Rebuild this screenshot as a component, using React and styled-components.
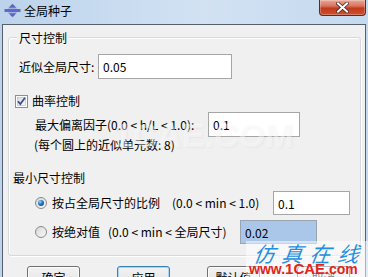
import React from 'react';
import styled, { createGlobalStyle } from 'styled-components';

const Global = createGlobalStyle`
  html, body { margin: 0; padding: 0; }
  body {
    width: 368px; height: 277px; overflow: hidden;
    background: #c4d9ee;
    font-family: "Noto Sans CJK SC", sans-serif;
    font-size: 12px; color: #000;
  }
`;

const Win = styled.div`
  position: relative;
  width: 368px; height: 277px;
  display: flex; flex-direction: column;
  overflow: hidden;
  background: linear-gradient(90deg, #bcd3eb 0%, #d2e2f3 55%, #c5d9ee 100%);
`;

const TitleBar = styled.div`
  height: 24px; flex-shrink: 0;
  display: flex; align-items: flex-start;
`;

const AppIcon = styled.svg`
  margin: 3px 0 0 4px; flex-shrink: 0;
`;

const Title = styled.div`
  margin-left: 3px;
  line-height: 22px;
  font-size: 12px;
`;

const CloseBtn = styled.div`
  margin-left: auto; margin-right: 2px;
  width: 45px; height: 15px;
  border: 1px solid #5e2a20; border-top: none;
  border-radius: 0 0 4px 4px;
  background: linear-gradient(#e9a897 0%, #d8745c 40%, #c2391d 55%, #cd5232 100%);
  display: flex; align-items: center; justify-content: center;
  box-shadow: inset 0 0 0 1px rgba(255,255,255,0.25);
`;

const Client = styled.div`
  flex: 1;
  margin: 0 2px;
  border: 1px solid #56606c; border-bottom: none;
  background: #f0f0f0;
  padding: 12px 4px 0 5px;
  display: flex; flex-direction: column;
`;

const Group = styled.div`
  position: relative;
  border: 1px solid #d3d9de;
  border-radius: 3px;
  box-shadow: inset 1px 1px 0 #fff, 1px 1px 0 #fff;
  padding: 16px 0 11px 0;
  display: flex; flex-direction: column;
`;

const Legend = styled.div`
  position: absolute; left: 8px; top: -8px;
  padding: 0 2px;
  background: #f0f0f0;
  line-height: 16px;
`;

const Row = styled.div`
  display: flex; align-items: center;
  height: ${p => p.$h}px;
  margin-top: ${p => p.$mt || 0}px;
  padding-left: ${p => p.$pl || 0}px;
  white-space: nowrap;
`;

const Label = styled.span`
  display: inline-block;
  width: ${p => (p.$w ? `${p.$w}px` : 'auto')};
  flex-shrink: 0;
  line-height: 16px;
  white-space: nowrap;
`;

const Field = styled.div`
  box-sizing: border-box;
  width: ${p => p.$w}px; height: ${p => p.$h || 25}px;
  border: 1px solid ${p => (p.$sel ? '#9aa4b0' : '#a6a6a6')};
  background: ${p => (p.$sel ? '#aac6e9' : '#fff')};
  padding-left: 4px;
  display: flex; align-items: center;
  flex-shrink: 0;
`;

const Check = styled.svg`
  flex-shrink: 0; margin-right: 4px;
`;

const Radio = styled.svg`
  flex-shrink: 0; margin-right: 5px;
`;

const ButtonRow = styled.div`
  display: flex; gap: 37px;
  margin-top: 10px; padding-left: 19px;
`;

const Button = styled.div`
  box-sizing: border-box;
  width: 53px; height: 23px; flex-shrink: 0;
  border: 1px solid ${p => (p.$def ? '#3c7fb1' : '#707070')};
  border-radius: 3px;
  background: linear-gradient(#f2f2f2 0%, #ebebeb 45%, #dddddd 50%, #cfcfcf 100%);
  box-shadow: inset 0 0 0 1px ${p => (p.$def ? '#a6d6f4' : 'rgba(255,255,255,0.8)')};
  display: flex; align-items: center; justify-content: center;
  line-height: 16px;
`;

const WatermarkFaint = styled.div`
  position: absolute; left: 114px; top: 116px;
  font-family: "Liberation Sans", sans-serif;
  font-weight: bold; font-size: 34px;
  color: rgba(255,255,255,0.45);
  text-shadow: 1px 1px 2px rgba(0,0,0,0.04);
  pointer-events: none;
`;

const WatermarkBox = styled.div`
  position: absolute; left: 246px; top: 241px;
  width: 122px; height: 36px;
  background: rgba(255,255,255,0.5);
  pointer-events: none;
`;

const WmCn = styled.div`
  position: absolute; left: 254px; top: 240px;
  font-family: "Noto Sans CJK SC", sans-serif;
  font-size: 21px; font-style: italic;
  letter-spacing: 7px;
  color: #1f8fe0;
  line-height: 26px;
  transform: skewX(-8deg);
  pointer-events: none;
`;

const WmEn = styled.div`
  position: absolute; left: 249px; top: 261px;
  font-family: "Liberation Sans", sans-serif;
  font-weight: bold; font-size: 14px;
  color: #e0241b;
  line-height: 16px;
  pointer-events: none;
  & b { font-size: 15px; }
`;

const CheckBox = () => (
  <Check width="13" height="13" viewBox="0 0 13 13">
    <defs>
      <linearGradient id="cbg" x1="0" y1="0" x2="1" y2="1">
        <stop offset="0" stopColor="#dcdcdc" />
        <stop offset="1" stopColor="#fbfbfb" />
      </linearGradient>
    </defs>
    <rect x="0.5" y="0.5" width="12" height="12" fill="#fff" stroke="#8e8f8f" />
    <rect x="2.5" y="2.5" width="8" height="8" fill="url(#cbg)" stroke="#c4c6c9" strokeWidth="0.8" />
    <path d="M3 6.2 L5.3 9 L10 2.8" fill="none" stroke="#3d4f8f" strokeWidth="1.8" />
  </Check>
);

const RadioBtn = ({ on }) => (
  <Radio width="12" height="12" viewBox="0 0 12 12">
    <defs>
      <linearGradient id="rbg" x1="0" y1="0" x2="1" y2="1">
        <stop offset="0" stopColor="#d6d6d6" />
        <stop offset="1" stopColor="#fafafa" />
      </linearGradient>
      <radialGradient id="rdot" cx="0.35" cy="0.3" r="0.8">
        <stop offset="0" stopColor="#8fd0ff" />
        <stop offset="0.5" stopColor="#2d7bc4" />
        <stop offset="1" stopColor="#0d3f7a" />
      </radialGradient>
    </defs>
    <circle cx="6" cy="6" r="5.5" fill="url(#rbg)" stroke="#8a8a8a" />
    {on && <circle cx="6" cy="6" r="3" fill="url(#rdot)" />}
  </Radio>
);

export default function App() {
  return (
    <>
      <Global />
      <Win>
        <TitleBar>
          <AppIcon width="17" height="15" viewBox="0 0 17 15">
            <defs>
              <linearGradient id="ic" x1="0" y1="0" x2="0" y2="1">
                <stop offset="0" stopColor="#8a8fd6" />
                <stop offset="0.5" stopColor="#4c5cb8" />
                <stop offset="1" stopColor="#8a8fd6" />
              </linearGradient>
            </defs>
            <path d="M8.5 0.5 L13 5.5 L4 5.5 Z" fill="url(#ic)" />
            <rect x="0.5" y="6" width="16" height="3" fill="#5d6bc2" />
            <path d="M4 9.5 L13 9.5 L8.5 14.5 Z" fill="url(#ic)" />
          </AppIcon>
          <Title>全局种子</Title>
          <CloseBtn>
            <svg width="13" height="11" viewBox="0 0 13 11">
              <path d="M2 1.5 L11 9.5 M11 1.5 L2 9.5" stroke="#4a2a26" strokeWidth="3.6" strokeLinecap="square" />
              <path d="M2 1.5 L11 9.5 M11 1.5 L2 9.5" stroke="#fff" strokeWidth="2" strokeLinecap="square" />
            </svg>
          </CloseBtn>
        </TitleBar>
        <Client>
          <Group>
            <Legend>尺寸控制</Legend>
            <Row $h={25} $pl={10}>
              <Label $w={79}>近似全局尺寸:</Label>
              <Field $w={134}>0.05</Field>
            </Row>
            <Row $h={16} $mt={14} $pl={6}>
              <CheckBox />
              <Label>曲率控制</Label>
            </Row>
            <Row $h={25} $mt={3} $pl={26}>
              <Label $w={173}>最大偏离因子(0.0 &lt; h/L &lt; 1.0):</Label>
              <Field $w={92}>0.1</Field>
            </Row>
            <Row $h={16} $pl={25}>
              <Label>(每个圆上的近似单元数: 8)</Label>
            </Row>
            <Row $h={16} $mt={17} $pl={4}>
              <Label>最小尺寸控制</Label>
            </Row>
            <Row $h={24} $mt={5} $pl={26}>
              <RadioBtn on />
              <Label $w={120}>按占全局尺寸的比例</Label>
              <Label $w={101}>(0.0 &lt; min &lt; 1.0)</Label>
              <Field $w={77} $h={24}>0.1</Field>
            </Row>
            <Row $h={24} $mt={5} $pl={26}>
              <RadioBtn />
              <Label $w={56}>按绝对值</Label>
              <Label $w={132}>(0.0 &lt; min &lt; 全局尺寸)</Label>
              <Field $w={77} $h={24} $sel>0.02</Field>
            </Row>
          </Group>
          <ButtonRow>
            <Button>确定</Button>
            <Button $def>应用</Button>
            <Button>默认值</Button>
            <Button>取消</Button>
          </ButtonRow>
        </Client>
        <WatermarkFaint>1CAE.COM</WatermarkFaint>
        <WatermarkBox />
        <WmCn>仿真在线</WmCn>
        <WmEn>www.<b>1CAE</b>.com</WmEn>
      </Win>
    </>
  );
}
